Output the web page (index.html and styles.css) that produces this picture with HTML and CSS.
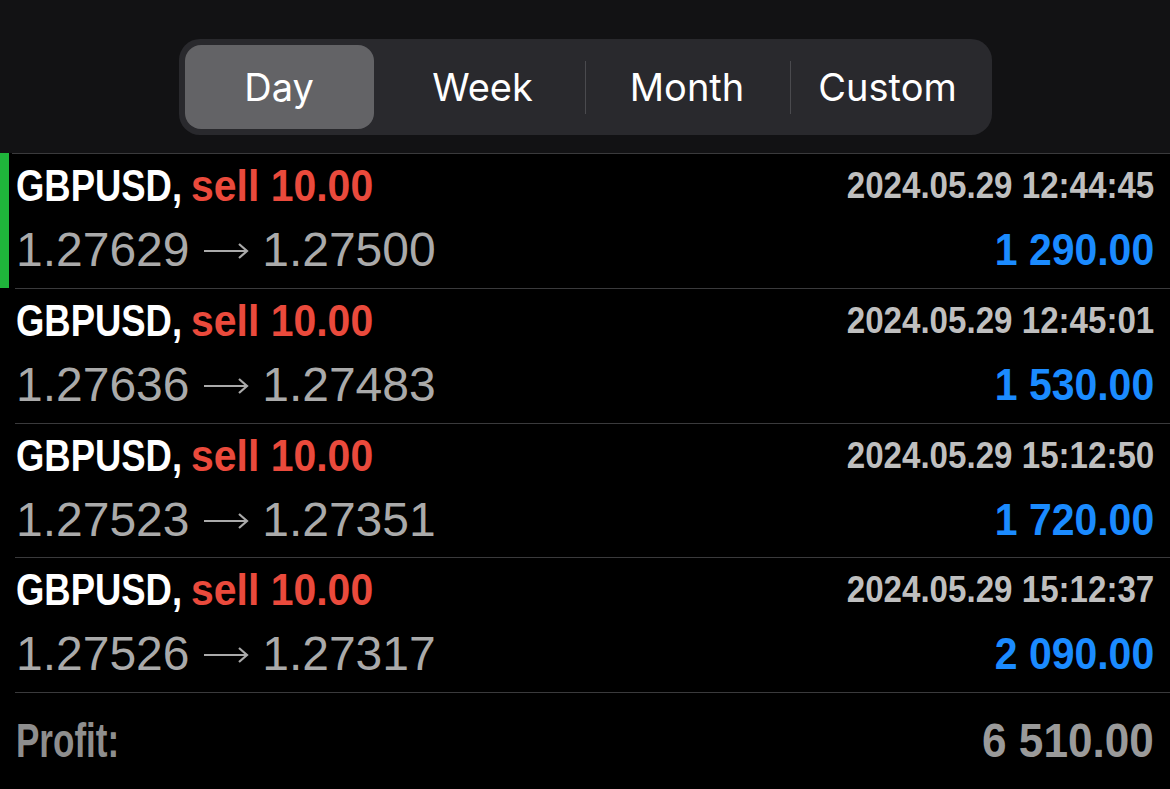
FILE: index.html
```html
<!DOCTYPE html>
<html lang="en">
<head>
	<meta charset="UTF-8">
	<title>History</title>
	<meta name="viewport" content="width=device-width,user-scalable=no">
	<link rel="stylesheet" href="styles.css">
</head>
<body>
	<header class="top">
		<nav class="seg">
			<a href="javascript:;" class="on">Day</a>
			<a href="javascript:;">Week</a>
			<a href="javascript:;" class="sep">Month</a>
			<a href="javascript:;" class="sep">Custom</a>
		</nav>
	</header>
	<ul class="deals">
		<li class="deal open">
			<div class="body">
				<div class="line1">
					<p class="title"><span class="sym">GBPUSD,</span> <span class="side">sell 10.00</span></p>
					<p class="time">2024.05.29 12:44:45</p>
				</div>
				<div class="line2">
					<p class="price">1.27629 <svg class="arrow" viewBox="0 0 46 20"><path d="M1 10H44M36 3L44 10L36 17"/></svg> 1.27500</p>
					<p class="profit">1 290.00</p>
				</div>
			</div>
		</li>
		<li class="deal">
			<div class="body">
				<div class="line1">
					<p class="title"><span class="sym">GBPUSD,</span> <span class="side">sell 10.00</span></p>
					<p class="time">2024.05.29 12:45:01</p>
				</div>
				<div class="line2">
					<p class="price">1.27636 <svg class="arrow" viewBox="0 0 46 20"><path d="M1 10H44M36 3L44 10L36 17"/></svg> 1.27483</p>
					<p class="profit">1 530.00</p>
				</div>
			</div>
		</li>
		<li class="deal">
			<div class="body">
				<div class="line1">
					<p class="title"><span class="sym">GBPUSD,</span> <span class="side">sell 10.00</span></p>
					<p class="time">2024.05.29 15:12:50</p>
				</div>
				<div class="line2">
					<p class="price">1.27523 <svg class="arrow" viewBox="0 0 46 20"><path d="M1 10H44M36 3L44 10L36 17"/></svg> 1.27351</p>
					<p class="profit">1 720.00</p>
				</div>
			</div>
		</li>
		<li class="deal">
			<div class="body">
				<div class="line1">
					<p class="title"><span class="sym">GBPUSD,</span> <span class="side">sell 10.00</span></p>
					<p class="time">2024.05.29 15:12:37</p>
				</div>
				<div class="line2">
					<p class="price">1.27526 <svg class="arrow" viewBox="0 0 46 20"><path d="M1 10H44M36 3L44 10L36 17"/></svg> 1.27317</p>
					<p class="profit">2 090.00</p>
				</div>
			</div>
		</li>
	</ul>
	<footer class="total">
		<div class="body">
			<p class="label">Profit:</p>
			<p class="sum">6 510.00</p>
		</div>
	</footer>
</body>
</html>
```

FILE: styles.css
```css
body{
	margin: 0;
	background: #000;
	font-family: "Liberation Sans", Arial, sans-serif;
}
html{
	overflow: hidden;
}
p{
	margin: 0;
	white-space: nowrap;
}
.top{
	height: 153px;
	box-sizing: border-box;
	padding-top: 39px;
	background: #121214;
	display: flex;
	justify-content: center;
}
.seg{
	width: 813px;
	height: 96px;
	box-sizing: border-box;
	padding: 6px;
	background: #29292d;
	border-radius: 21px;
	display: grid;
	grid-template-columns: 196px 204px 205px 196px;
}
.seg a{
	display: block;
	height: 84px;
	line-height: 84px;
	text-align: center;
	color: #fff;
	text-decoration: none;
	font-family: Inter, "Noto Sans", sans-serif;
	font-size: 38px;
}
.seg a.on{
	width: 189px;
	background: #636366;
	border-radius: 16px;
}
.seg a.sep{
	background: linear-gradient(#4a4a4e, #4a4a4e) left center / 1px 53px no-repeat;
}
.deals{
	list-style: none;
	margin: 0;
	padding: 0;
}
.deal{
	height: 134.75px;
	display: flex;
	padding-left: 15px;
}
.deal.open{
	box-shadow: inset 9px 0 #1fb53b;
}
.deal .body,
.total .body{
	flex: 1;
	border-top: 1px solid #3a3a3c;
	padding: 4px 16px 0 1px;
}
.deal.open .body{
	margin-left: -3px;
	padding-left: 4px;
}
.line1,
.line2,
.total .body{
	display: flex;
	justify-content: space-between;
	align-items: flex-start;
}
.line1{
	height: 56px;
	line-height: 56px;
}
.line2{
	line-height: 72px;
}
.title{
	font-size: 45px;
	font-weight: bold;
	color: #fff;
}
.sym,
.side{
	display: inline-block;
	transform-origin: left center;
}
.sym{
	transform: scaleX(0.81);
	margin-right: -43px;
}
.side{
	color: #ea4a3c;
	transform: scaleX(0.91);
}
.time{
	font-size: 36px;
	font-weight: bold;
	color: #bfbfbf;
	transform: scaleX(0.92);
	transform-origin: right center;
}
.price{
	font-size: 48px;
	color: #aaaaaa;
}
.arrow{
	width: 46px;
	height: 20px;
	vertical-align: 5px;
	fill: none;
	stroke: #aaaaaa;
	stroke-width: 2.2;
}
.profit{
	font-size: 45px;
	font-weight: bold;
	color: #1b8bff;
	transform: scaleX(0.91);
	transform-origin: right center;
}
.total{
	display: flex;
	padding-left: 15px;
}
.total .body{
	height: 96px;
	padding-top: 17px;
	line-height: 60px;
	font-size: 49px;
	font-weight: bold;
	color: #8e8e8e;
}
.label{
	transform: scaleX(0.715);
	transform-origin: left center;
}
.sum{
	color: #9a9a9a;
	transform: scaleX(0.9);
	transform-origin: right center;
}
```
